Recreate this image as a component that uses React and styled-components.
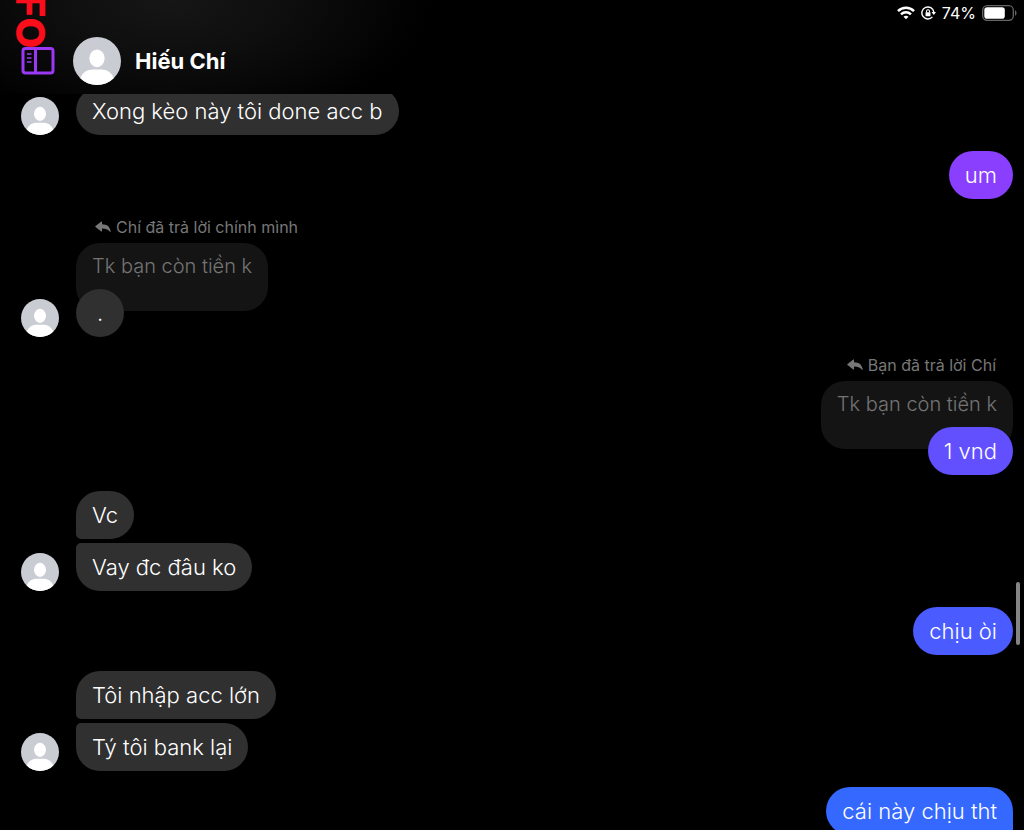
import React from "react";
import styled, { createGlobalStyle, css } from "styled-components";

const GlobalStyle = createGlobalStyle`
  * { box-sizing: border-box; }
  body { margin: 0; background: #000; }
`;

const Screen = styled.div`
  position: relative;
  display: flex;
  flex-direction: column;
  height: 100vh;
  overflow: hidden;
  background: #000;
  color: #fff;
  font-family: Inter, "Liberation Sans", sans-serif;
`;

const TopArea = styled.header`
  flex: none;
  background: radial-gradient(ellipse 260px 130px at 170px 0, #161616, #0e0e0e 45%, #000 100%);
`;

const StatusBar = styled.div`
  display: flex;
  align-items: center;
  justify-content: flex-end;
  gap: 6px;
  height: 28px;
  padding: 0 7px 2px 0;
  font-size: 16px;
  line-height: 20px;
`;

const StatusIcon = styled.svg`
  display: block;
  flex: none;
`;

const TitleRow = styled.div`
  display: flex;
  align-items: center;
  height: 66px;
  padding: 0 21px;
`;

const IconButton = styled.button`
  display: block;
  margin: 0 18px 0 0;
  padding: 0;
  border: 0;
  background: none;
  color: #9a38f5;
  cursor: pointer;
`;

const Name = styled.h1`
  margin: 0 0 0 14px;
  font-size: 22px;
  line-height: 28px;
  font-weight: 700;
`;

const Watermark = styled.div`
  position: absolute;
  top: -6px;
  left: 6px;
  z-index: 2;
  writing-mode: vertical-rl;
  color: #fb0d1b;
  font: 800 40px/48px Inter, "Liberation Sans", sans-serif;
  pointer-events: none;
`;

const Thread = styled.main`
  flex: 1;
  min-height: 0;
  overflow: hidden;
`;

const Messages = styled.div`
  display: flex;
  flex-direction: column;
  gap: 16px;
  margin-top: -7px;
  padding: 0 11px 0 21px;
`;

const Group = styled.section`
  display: flex;
  align-items: flex-end;
  justify-content: ${(p) => (p.$mine ? "flex-end" : "flex-start")};
  gap: 17px;
`;

const Stack = styled.div`
  display: flex;
  flex-direction: column;
  align-items: ${(p) => (p.$mine ? "flex-end" : "flex-start")};
  gap: 4px;
`;

const Bubble = styled.div`
  position: relative;
  flex: none;
  min-width: 48px;
  padding: 10px 16px;
  border-radius: 24px;
  background: ${(p) => p.$color || "#303030"};
  font-size: 22px;
  font-weight: 300;
  line-height: 28px;
  text-align: center;
  white-space: nowrap;
  ${(p) => p.$first && css`border-bottom-left-radius: 5px;`}
  ${(p) => p.$last && css`border-top-left-radius: 5px;`}
  ${(p) => p.$open && css`border-bottom-right-radius: 5px;`}
`;

const ReplyStack = styled.div`
  display: flex;
  flex-direction: column;
  align-items: ${(p) => (p.$mine ? "flex-end" : "flex-start")};
`;

const ReplyLabel = styled.div`
  display: flex;
  align-items: center;
  gap: 5px;
  height: 28px;
  padding: 0 17px 4px 19px;
  color: #777;
  font-size: 16px;
  line-height: 24px;
`;

const Quote = styled.div`
  height: 68px;
  margin-bottom: -22px;
  padding: 9px 16px;
  border-radius: 24px;
  background: #141414;
  color: #747474;
  font-size: 20px;
  font-weight: 300;
  line-height: 28px;
`;

const Scrollbar = styled.div`
  position: absolute;
  top: 582px;
  right: 4px;
  width: 4px;
  height: 63px;
  border-radius: 2px;
  background: #848484;
`;

function Avatar({ size }) {
  return (
    <StatusIcon width={size} height={size} viewBox="0 0 48 48" role="img" aria-label="Hiếu Chí">
      <defs>
        <clipPath id="avatar-disc">
          <circle cx="24" cy="24" r="24" />
        </clipPath>
      </defs>
      <g clipPath="url(#avatar-disc)">
        <rect width="48" height="48" fill="#c9ccd2" />
        <ellipse cx="24" cy="21.3" rx="7.6" ry="8.9" fill="#fff" />
        <path d="M7 48V42C9 35.5 14 32.5 20 32.5H28C34 32.5 39 35.5 41 42V48Z" fill="#fff" />
      </g>
    </StatusIcon>
  );
}

function Wifi() {
  return (
    <StatusIcon width="18" height="14" viewBox="0 0 18 14" fill="none" stroke="#fff" strokeWidth="2.5">
      <path d="M1 5.2C5.5 .7 12.5 .7 17 5.2" />
      <path d="M4 8.3C6.8 5.6 11.2 5.6 14 8.3" />
      <path d="M6.5 10.7C7.9 9.4 10.1 9.4 11.5 10.7L9 13.2Z" fill="#fff" stroke="none" />
    </StatusIcon>
  );
}

function RotationLock() {
  return (
    <StatusIcon width="15" height="14" viewBox="0 0 15 14" fill="none" stroke="#fff" strokeWidth="1.4">
      <path d="M11.4 10.9A6 6 0 1 1 12.8 6" />
      <path d="M10.5 6H15L12.8 9Z" fill="#fff" stroke="none" />
      <rect x="4.5" y="6.2" width="5" height="4" rx=".6" fill="#fff" stroke="none" />
      <path d="M5.5 6.5V5.2A1.5 1.5 0 0 1 8.5 5.2V6.5" strokeWidth="1.1" />
    </StatusIcon>
  );
}

function Battery() {
  return (
    <StatusIcon width="35" height="16" viewBox="0 0 35 16">
      <rect x=".7" y=".7" width="30.6" height="14.6" rx="4.5" fill="none" stroke="#666" strokeWidth="1.3" />
      <rect x="2.3" y="2.3" width="20.5" height="11.4" rx="2.8" fill="#fff" />
      <path d="M33 5.2C35 6.2 35 9.8 33 10.8Z" fill="#666" />
    </StatusIcon>
  );
}

function SidebarIcon() {
  return (
    <StatusIcon width="34" height="28" viewBox="0 0 34 28" fill="none" stroke="currentColor">
      <rect x="2" y="1.5" width="30" height="24.5" rx="2.5" strokeWidth="3" />
      <path d="M14.5 2V26" strokeWidth="3" />
      <path d="M6 7H10.5M6 11H10.5M6 15H10.5" strokeWidth="1.7" />
    </StatusIcon>
  );
}

function ReplyArrow() {
  return (
    <StatusIcon width="16" height="12" viewBox="0 0 16 12" fill="currentColor">
      <path d="M6.4 .4Q7 0 7 .9V3.2C12 3.3 15.1 5.6 15.7 10.6Q15.7 11.4 15 10.8C13 8.3 10.5 7.6 7 7.6V10Q7 10.9 6.3 10.4L.5 6Q0 5.4 .5 4.9Z" />
    </StatusIcon>
  );
}

function Reply({ mine, label, quote, color, children }) {
  return (
    <ReplyStack $mine={mine}>
      <ReplyLabel>
        <ReplyArrow />
        {label}
      </ReplyLabel>
      <Quote>{quote}</Quote>
      <Bubble $color={color}>{children}</Bubble>
    </ReplyStack>
  );
}

function Incoming({ messages }) {
  const many = messages.length > 1;
  return (
    <Group>
      <Avatar size={38} />
      <Stack>
        {messages.map((text, i) => (
          <Bubble key={text} $first={many && i === 0} $last={many && i === messages.length - 1}>
            {text}
          </Bubble>
        ))}
      </Stack>
    </Group>
  );
}

export default function App() {
  return (
    <Screen>
      <GlobalStyle />
      <TopArea>
        <StatusBar>
          <Wifi />
          <RotationLock />
          <span>74%</span>
          <Battery />
        </StatusBar>
        <TitleRow>
          <IconButton type="button" aria-label="Sidebar">
            <SidebarIcon />
          </IconButton>
          <Avatar size={48} />
          <Name>Hiếu Chí</Name>
        </TitleRow>
      </TopArea>
      <Watermark>FO</Watermark>
      <Thread>
        <Messages>
          <Incoming messages={["Xong kèo này tôi done acc b"]} />
          <Group $mine>
            <Bubble $color="#8a3fff">um</Bubble>
          </Group>
          <Group>
            <Avatar size={38} />
            <Reply label="Chí đã trả lời chính mình" quote="Tk bạn còn tiền k">
              .
            </Reply>
          </Group>
          <Group $mine>
            <Reply mine label="Bạn đã trả lời Chí" quote="Tk bạn còn tiền k" color="#6250ff">
              1 vnd
            </Reply>
          </Group>
          <Incoming messages={["Vc", "Vay đc đâu ko"]} />
          <Group $mine>
            <Bubble $color="#4a5cff">chịu òi</Bubble>
          </Group>
          <Incoming messages={["Tôi nhập acc lớn", "Tý tôi bank lại"]} />
          <Group $mine>
            <Bubble $color="#3468ff" $open>cái này chịu tht</Bubble>
          </Group>
        </Messages>
      </Thread>
      <Scrollbar />
    </Screen>
  );
}
